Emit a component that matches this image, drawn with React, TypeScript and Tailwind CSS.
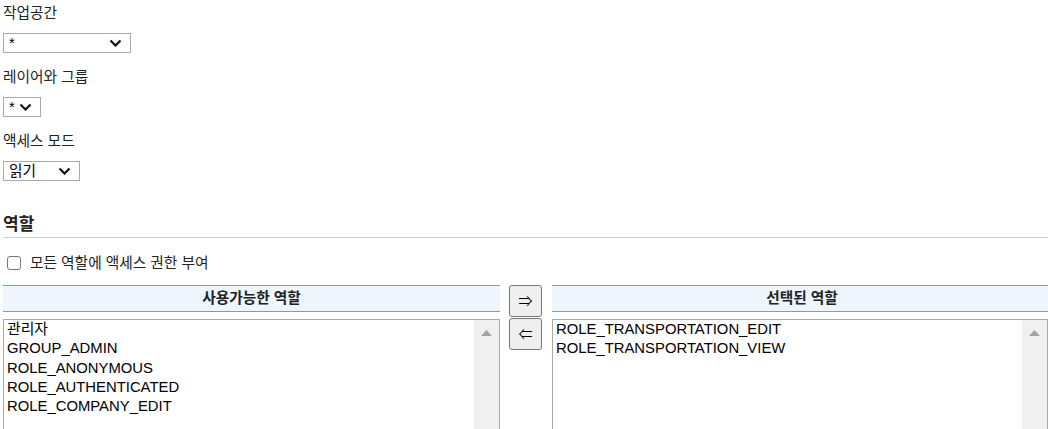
import type { ReactNode } from "react";

const font = "font-['Liberation_Sans','Noto_Sans_CJK_KR',sans-serif]";

function Chevron() {
  return (
    <svg width="13" height="8" viewBox="0 0 13 8" className="shrink-0">
      <polyline points="1.5,1.5 6.5,6.5 11.5,1.5" fill="none" stroke="#111" strokeWidth="2.2" />
    </svg>
  );
}

function FakeSelect({ value, className }: { value: string; className: string }) {
  return (
    <div
      className={`h-5 border border-[#aaaaaa] bg-white flex items-center justify-between pl-[5px] pr-[8px] text-[14.7px] text-black ${className}`}
    >
      <span className="leading-none">{value}</span>
      <Chevron />
    </div>
  );
}

function Field({ label, children }: { label: string; children: ReactNode }) {
  return (
    <div className="mb-[11px]">
      <div className="h-[26px] flex items-center text-[14.7px] text-[#222]">{label}</div>
      <div className="mt-[7px]">{children}</div>
    </div>
  );
}

function ListBox({ items }: { items: string[] }) {
  return (
    <div className="h-[130px] border border-[#aaaaaa] bg-white flex">
      <div className="flex-1 pl-[3px] text-[14.85px] leading-[19.3px] text-black whitespace-nowrap">
        {items.map((item) => (
          <div key={item}>{item}</div>
        ))}
      </div>
      <div className="w-[25px] bg-[#f0f0f0] flex justify-center pt-[10px]">
        <svg width="11" height="6" viewBox="0 0 11 6">
          <polygon points="0,6 5.5,0 11,6" fill="#a3a3a3" />
        </svg>
      </div>
    </div>
  );
}

function ListHeader({ title }: { title: string }) {
  return (
    <div className="h-[27px] border-y border-[#7d9cc1] bg-[#eef5fd] flex items-center justify-center text-[14.7px] font-bold text-[#222]">
      {title}
    </div>
  );
}

function MoveButton({ glyph }: { glyph: string }) {
  return (
    <div className="w-[33px] h-[32px] border border-[#767676] rounded-[3px] bg-[#efefef] flex items-center justify-center text-[14px] text-black">
      {glyph}
    </div>
  );
}

export default function App() {
  return (
    <div className={`${font} w-screen h-[429px] overflow-hidden bg-white`}>
      <div className="pl-[3px] w-[1100px]">
        <Field label="작업공간">
          <FakeSelect value="*" className="w-[128px]" />
        </Field>
        <Field label="레이어와 그룹">
          <FakeSelect value="*" className="w-[38px]" />
        </Field>
        <Field label="액세스 모드">
          <FakeSelect value="읽기" className="w-[77px]" />
        </Field>

        <div className="mt-[31px] h-[26px] flex items-center border-b border-[#cfdfa8] text-[17px] font-bold text-[#222] w-[1045px]">
          역할
        </div>

        <label className="mt-[12px] h-[26px] flex items-center gap-[9px] pl-[4px] text-[14.7px] text-[#222]">
          <span className="w-[14px] h-[14px] border border-[#767676] rounded-[3px] bg-white" />
          모든 역할에 액세스 권한 부여
        </label>

        <div className="mt-[9px] flex items-start">
          <div className="w-[497px] flex flex-col gap-[7px]">
            <ListHeader title="사용가능한 역할" />
            <ListBox
              items={["관리자", "GROUP_ADMIN", "ROLE_ANONYMOUS", "ROLE_AUTHENTICATED", "ROLE_COMPANY_EDIT"]}
            />
          </div>
          <div className="ml-[9px] flex flex-col gap-[1px]">
            <MoveButton glyph="⇒" />
            <MoveButton glyph="⇐" />
          </div>
          <div className="ml-[10px] w-[500px] flex flex-col gap-[7px]">
            <ListHeader title="선택된 역할" />
            <div className="w-[496px]">
              <ListBox items={["ROLE_TRANSPORTATION_EDIT", "ROLE_TRANSPORTATION_VIEW"]} />
            </div>
          </div>
        </div>
      </div>
    </div>
  );
}
